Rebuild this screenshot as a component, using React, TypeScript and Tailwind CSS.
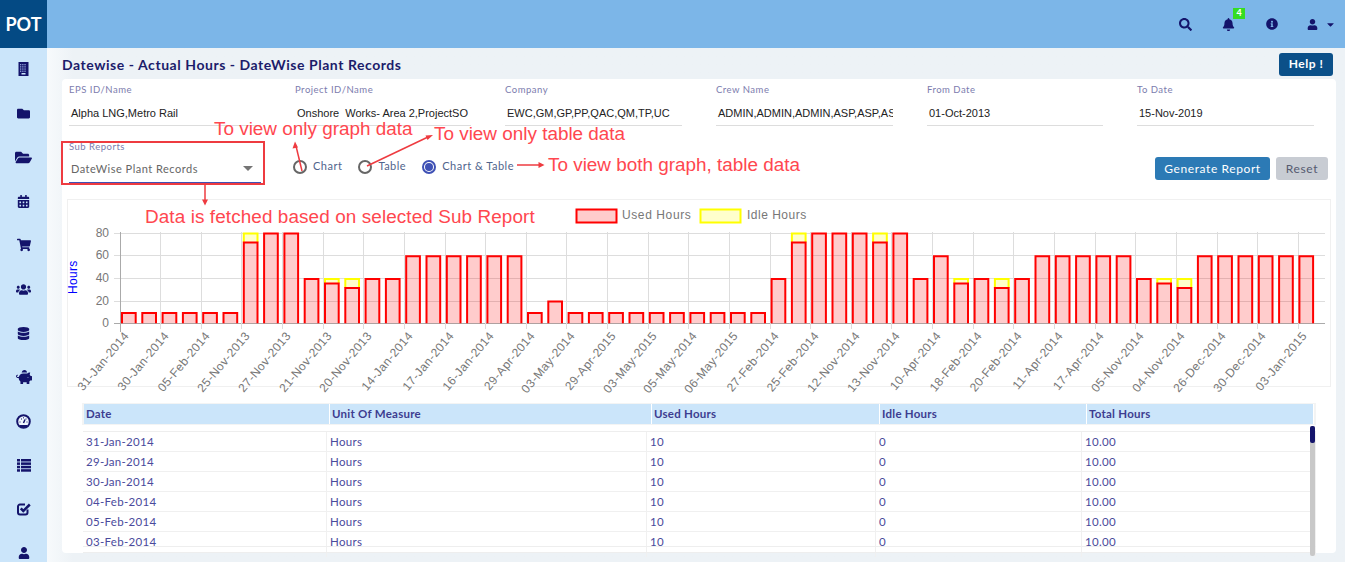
import React from "react";
import {
  FaFolder, FaFolderOpen, FaCalendarAlt, FaShoppingCart, FaUsers, FaDatabase,
  FaPiggyBank, FaUser, FaSearch, FaBell, FaInfoCircle, FaCaretDown,
} from "react-icons/fa";

function BuildingIcon() {
  const cells: React.ReactNode[] = [];
  for (let r = 0; r < 4; r++) for (let c = 0; c < 3; c++) cells.push(<rect key={`${r}${c}`} x={2 + c * 2.2} y={2 + r * 2.2} width="1.3" height="1.3" fill="#8fa3d8" />);
  return (
    <svg width="11" height="14" viewBox="0 0 11 14">
      <rect x="0.5" y="0" width="10" height="14" fill="#14146b" />
      {cells}
      <rect x="3.500" y="11" width="4" height="1.500" fill="#cbe5fa" />
    </svg>
  );
}
function GaugeIcon() {
  return (
    <svg width="15" height="15" viewBox="0 0 15 15">
      <circle cx="7.500" cy="7.500" r="6.300" fill="#eef6fd" stroke="#14146b" strokeWidth="2" />
      <path d="M3.500 8h1M5 5h1M7 3.800h1M9.500 5h1M10.500 8h1" stroke="#14146b" strokeWidth="1" />
      <path d="M7.500 9L9 5.500" stroke="#14146b" strokeWidth="1.500" />
      <path d="M4 12h7" stroke="#14146b" strokeWidth="2" />
    </svg>
  );
}
function ListIcon() {
  return (
    <svg width="14" height="13" viewBox="0 0 14 13" fill="#14146b">
      {[0, 3.400, 6.800, 10.200].map((y) => (
        <g key={y}>
          <rect x="0" y={y} width="3" height="2.500" />
          <rect x="4" y={y} width="10" height="2.500" />
        </g>
      ))}
    </svg>
  );
}
function CheckIcon() {
  return (
    <svg width="14" height="14" viewBox="0 0 14 14" fill="none" stroke="#14146b">
      <path d="M10.500 7.500V10.500a2 2 0 0 1-2 2H3a2 2 0 0 1-2-2V4.500a2 2 0 0 1 2-2H8" strokeWidth="2" />
      <path d="M3.800 6.300L6.300 9L12.800 2.500" strokeWidth="2.500" />
    </svg>
  );
}

const sideIcons: React.ReactNode[] = [
  <BuildingIcon />, <FaFolder size={13} />, <FaFolderOpen size={17} />, <FaCalendarAlt size={13} />,
  <FaShoppingCart size={14} />, <FaUsers size={15} />, <FaDatabase size={13} />, <FaPiggyBank size={16} />,
  <GaugeIcon />, <ListIcon />, <CheckIcon />, <FaUser size={12} />,
];

const fields = [
  { label: "EPS ID/Name", value: "Alpha LNG,Metro Rail", w: "w-[192px]" },
  { label: "Project ID/Name", value: "Onshore\u00a0 Works- Area 2,ProjectSO", w: "w-[176px]" },
  { label: "Company", value: "EWC,GM,GP,PP,QAC,QM,TP,UC", w: "w-[177px]" },
  { label: "Crew Name", value: "ADMIN,ADMIN,ADMIN,ASP,ASP,ASP,ASP", w: "w-[177px]" },
  { label: "From Date", value: "01-Oct-2013", w: "w-[176px]" },
  { label: "To Date", value: "15-Nov-2019", w: "w-[177px]" },
];

const used = [10,10,10,10,10,10,72,80,80,40,36,32,40,40,60,60,60,60,60,60,10,20,10,10,10,10,10,10,10,10,10,10,40,72,80,80,80,72,80,40,60,36,40,32,40,60,60,60,60,60,40,36,32,60,60,60,60,60,60];
const idle = used.map((u) => (u === 72 ? 8 : u === 36 ? 4 : u === 32 ? 8 : 0));

const dates = ["31-Jan-2014","30-Jan-2014","05-Feb-2014","25-Nov-2013","27-Nov-2013","21-Nov-2013","20-Nov-2013","14-Jan-2014","17-Jan-2014","16-Jan-2014","29-Apr-2014","03-May-2014","29-Apr-2015","03-May-2015","05-May-2014","06-May-2015","27-Feb-2014","25-Feb-2014","12-Nov-2014","13-Nov-2014","10-Apr-2014","18-Feb-2014","20-Feb-2014","11-Apr-2014","17-Apr-2014","05-Nov-2014","04-Nov-2014","26-Dec-2014","30-Dec-2014","03-Jan-2015"];

const rows = ["31-Jan-2014","29-Jan-2014","30-Jan-2014","04-Feb-2014","05-Feb-2014","03-Feb-2014"];
const bodyCols = "grid-cols-[244px_320px_229px_206px_1fr]";

const y0 = 323.3;
const sy = 90.8 / 80;

function barPath(x: number, w: number, bottom: number, top: number) {
  return `M${x} ${bottom}V${top}H${x + w}V${bottom}`;
}

function Chart() {
  const axisFont = { fontFamily: "'Liberation Sans', sans-serif", fontSize: 12, letterSpacing: 0.6 };
  return (
    <svg width="1264" height="188" viewBox="67 199 1264 188" className="-m-px block overflow-visible">
      <rect x="576.5" y="209.5" width="40" height="13" fill="rgba(255,0,0,.2)" stroke="#f00" strokeWidth="2" />
      <text x="622" y="219" fill="#777" {...axisFont}>Used Hours</text>
      <rect x="700.5" y="209.5" width="40" height="13" fill="rgba(255,255,0,.2)" stroke="#ff0" strokeWidth="2" />
      <text x="747" y="219" fill="#777" {...axisFont} letterSpacing={0.5}>Idle Hours</text>

      {[0, 20, 40, 60, 80].map((v) => {
        const y = Math.round(y0 - v * sy) + 0.5;
        return (
          <g key={v}>
            <line x1="114" x2="1325" y1={y} y2={y} stroke={v === 0 ? "#aaa" : "#ddd"} />
            <text x="109" y={y + 3} textAnchor="end" fill="#777" {...axisFont} letterSpacing={0}>{v}</text>
          </g>
        );
      })}
      {dates.map((d, i) => {
        const x = Math.round(119.5 + i * 40.63) + 0.5;
        return (
          <g key={d + i}>
            <line x1={x} x2={x} y1="232" y2={i === 0 ? 332 : 329} stroke={i === 0 ? "#aaa" : "#ddd"} />
            <text transform={`translate(${x + 9} 336) rotate(-50)`} textAnchor="end" fill="#777" {...axisFont} letterSpacing={0.45}>{d}</text>
          </g>
        );
      })}
      {used.map((u, i) => {
        const x = 122 + i * 20.3;
        const top = y0 - u * sy + 1;
        return (
          <g key={i}>
            <rect x={x} y={top} width="13.7" height={y0 - top} fill="rgba(255,0,0,.2)" />
            {idle[i] > 0 && (
              <>
                <rect x={x} y={y0 - (u + idle[i]) * sy + 1} width="13.7" height={idle[i] * sy} fill="rgba(255,255,0,.2)" />
                <path d={barPath(x, 13.7, top, y0 - (u + idle[i]) * sy + 1)} fill="none" stroke="#ff0" strokeWidth="2" />
              </>
            )}
            <path d={barPath(x, 13.7, y0, top)} fill="none" stroke="#f00" strokeWidth="2" />
          </g>
        );
      })}
      <text transform="translate(77 294) rotate(-90)" fill="#00f" {...axisFont} letterSpacing={0.3}>Hours</text>
    </svg>
  );
}

function Radio({ label, on }: { label: string; on?: boolean }) {
  return (
    <div className="flex items-center gap-[6px]">
      <span className={`flex h-[14px] w-[14px] items-center justify-center rounded-full border-2 ${on ? "border-[#3f51b5]" : "border-[#666]"}`}>
        {on && <span className="h-[8px] w-[8px] rounded-full bg-[#3f51b5]" />}
      </span>
      <span className="-mt-[2px] text-[11px] tracking-[0.5px] text-[#50648c]">{label}</span>
    </div>
  );
}

function Note({ className, children }: { className: string; children: React.ReactNode }) {
  return <div className={`absolute whitespace-nowrap font-['Liberation_Sans',sans-serif] text-[18.9px] leading-[20px] text-[#ff474f] ${className}`}>{children}</div>;
}

export default function App() {
  return (
    <div className="relative flex h-[562px] w-[1345px] flex-col overflow-hidden font-['Lato',sans-serif]">
      <header className="flex h-12 shrink-0 items-center bg-[#7cb6e8] text-[#14146b]">
        <div className="flex h-12 w-[47px] items-center justify-center bg-[#044a84] text-[18px] font-bold text-white">POT</div>
        <div className="ml-auto flex items-center">
          <div className="flex w-[43px] justify-center"><FaSearch size={13} /></div>
          <div className="relative flex w-[43px] justify-center">
            <FaBell size={13} />
            <span className="absolute left-[26px] top-[-10px] flex h-[11px] w-[12px] items-center justify-center bg-[#35dd22] text-[9px] font-bold text-white">4</span>
          </div>
          <div className="flex w-[43px] justify-center"><FaInfoCircle size={12} /></div>
          <div className="flex w-[52px] items-center pl-[14px]">
            <FaUser size={11} />
            <FaCaretDown size={11} className="ml-[7px]" />
          </div>
        </div>
      </header>
      <div className="flex min-h-0 flex-1">
        <aside className="flex w-[47px] shrink-0 flex-col items-center overflow-hidden bg-[#cbe5fa] text-[#14146b]">
          <div className="-mt-px">
            {sideIcons.map((icon, i) => (
              <div key={i} className="flex h-[44px] w-[47px] shrink-0 items-center justify-center">{icon}</div>
            ))}
          </div>
        </aside>
        <main className="min-w-0 flex-1 bg-linear-to-r from-[#f7fafc] to-[#edf2f6] to-[2%] pl-[15px]">
          <div className="flex h-[31px] w-[1271px] items-center justify-between pt-[1px]">
            <h1 className="text-[14px] font-bold tracking-[0.55px] text-[#1c1c6b]">Datewise - Actual Hours - DateWise Plant Records</h1>
            <button className="h-[23px] w-[54px] rounded-[3px] bg-[#0b5089] text-[12px] font-bold tracking-[0.5px] text-white">Help !</button>
          </div>
          <section className="h-[474px] w-[1274px] rounded-[4px] bg-white pl-[7px] pt-[5px]">
            <div className="flex gap-[34px]">
              {fields.map((f) => (
                <div key={f.label} className={f.w}>
                  <div className="h-[14px] text-[9.5px] leading-[11px] tracking-[0.5px] text-[#7c7cae]">{f.label}</div>
                  <div className="flex h-[28px] items-center overflow-hidden whitespace-nowrap border-b border-[#ddd] pl-[2px] pt-[3px] font-['Liberation_Sans',sans-serif] text-[11px] text-[#222]">{f.value}</div>
                </div>
              ))}
            </div>
            <div className="mt-[16px] flex h-[42px]">
              <div className="flex h-[41px] w-[192px] flex-col border-b border-[#3f51b5]">
                <div className="-mt-px h-[12px] text-[9.5px] leading-[12px] tracking-[0.5px] text-[#7c7cae]">Sub Reports</div>
                <div className="flex flex-1 items-center justify-between pl-[2px] pr-[8px] pt-[4px] text-[11px] tracking-[0.5px] text-[#666]">
                  <span>DateWise Plant Records</span>
                  <svg width="10" height="5" viewBox="0 0 10 5" className="-mt-[3px]"><path d="M0 0h10L5 5z" fill="#757575" /></svg>
                </div>
              </div>
              <div className="ml-[32px] flex h-[36px] items-center gap-[16px] pt-[14px]">
                <Radio label="Chart" />
                <Radio label="Table" />
                <Radio label="Chart & Table" on />
              </div>
              <div className="ml-auto mr-[8px] flex gap-[6px] pt-[15px]">
                <button className="h-[23px] w-[115px] rounded-[3px] bg-[#2c7ab5] text-[12px] tracking-[0.6px] text-white">Generate Report</button>
                <button className="h-[23px] w-[52px] rounded-[3px] bg-[#c8ccd3] text-[12px] tracking-[0.6px] text-[#555a70]">Reset</button>
              </div>
            </div>
            <div className="-ml-[2px] mt-[15px] h-[188px] w-[1264px] border border-[#f0f0f0]">
              <Chart />
            </div>
            <div className="ml-[13px] mt-[16px] w-[1234px] text-[11.5px] tracking-[0.3px] text-[#3d3d90]">
              <div className="grid h-[22px] grid-cols-[246px_322px_228px_207px_1fr] bg-[#f3f4f4] px-[2px] py-[1px] font-bold tracking-[0.25px]">
                {["Date", "Unit Of Measure", "Used Hours", "Idle Hours", "Total Hours"].map((h) => (
                  <div key={h} className="flex items-center border-r border-white bg-[#cbe5fa] pl-[2px]">{h}</div>
                ))}
              </div>
              <div className="ml-[1px] mt-[6px] h-[115px] overflow-hidden border-t border-[#eee]">
                {rows.map((d) => (
                  <div key={d} className={`grid h-[20px] ${bodyCols} border-b border-[#f0f0f0]`}>
                    {[d, "Hours", "10", "0", "10.00"].map((c, i) => (
                      <div key={i} className="flex items-center border-r border-[#f0f0f0] pl-[3px] text-[#4a4a9c]">{c}</div>
                    ))}
                  </div>
                ))}
              </div>
              <div className="ml-[1px] border-t border-[#eee]">
                <div className={`grid h-[5px] ${bodyCols}`}>
                  {[0, 1, 2, 3, 4].map((i) => <div key={i} className="border-r border-[#f0f0f0]" />)}
                </div>
                <div className={`grid h-[5px] ${bodyCols} border-t border-[#eee]`}>
                  {[0, 1, 2, 3, 4].map((i) => <div key={i} className="border-r border-[#f0f0f0]" />)}
                </div>
              </div>
            </div>
          </section>
        </main>
      </div>

      {/* annotations over the page */}
      <div className="absolute left-[1310px] top-[426px] h-[130px] w-[5px] rounded-[2px] bg-[#c8c8c8]">
        <div className="h-[17px] w-[5px] rounded-[2px] bg-[#14146b]" />
      </div>
      <div className="absolute left-[61px] top-[141px] h-[44px] w-[204px] border-2 border-[#ee3b40]" />
      <Note className="left-[214px] top-[119px]">To view only graph data</Note>
      <Note className="left-[434px] top-[124px]">To view only table data</Note>
      <Note className="left-[548px] top-[155px]">To view both graph, table data</Note>
      <Note className="left-[145px] top-[207px] tracking-[0.1px]">Data is fetched based on selected Sub Report</Note>
      <svg width="1345" height="562" className="pointer-events-none absolute left-0 top-0">
        <g stroke="#ee3b40" strokeWidth="1.5" fill="#ee3b40">
          <line x1="302" y1="171" x2="296" y2="146" />
          <path d="M295 141.5l3 6-5.500 1z" stroke="none" />
          <line x1="367" y1="166" x2="428" y2="137" />
          <path d="M433 135l-5.500 5-2-4.500z" stroke="none" />
          <line x1="517" y1="165" x2="539" y2="165" />
          <path d="M544.500 165l-6-3v6z" stroke="none" />
          <line x1="205" y1="185" x2="205" y2="200" />
          <path d="M205 205.500l-3-6h6z" stroke="none" />
        </g>
      </svg>
    </div>
  );
}
